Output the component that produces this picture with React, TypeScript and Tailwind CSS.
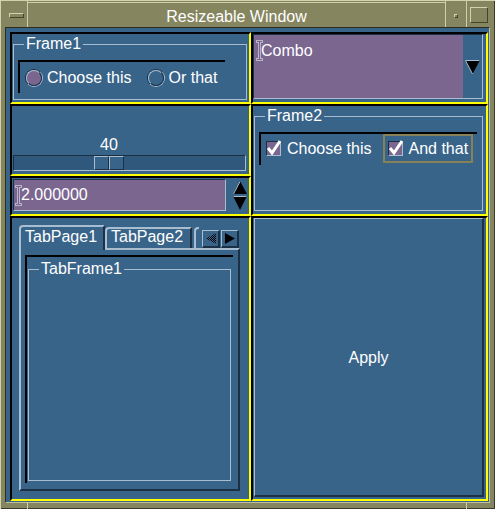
import React from "react";

// Motif-ish "Resizeable Window" with the layout debug grid (yellow) turned on

const cell = "border-2 border-black border-r-[#ffff00] border-b-[#ffff00]";
const sunkenBlack = "border-t-2 border-l-2 border-black";

function IBeam() {
  return (
    <svg width="7" height="21" viewBox="0 0 7 21" className="shrink-0">
      <path
        d="M0.5 0.5H6.5V2.5H4.5V18.5H6.5V20.5H0.5V18.5H2.5V2.5H0.5Z"
        fill="none"
        stroke="#fff"
        strokeWidth="1"
        strokeDasharray="1 1"
      />
    </svg>
  );
}

function GroupBox({ title, className, children }: { title: string; className?: string; children?: React.ReactNode }) {
  return (
    <fieldset className={"border border-[#a9bdd0] min-w-0 " + (className ?? "")}>
      <legend className="ml-[10px] px-[2px] leading-[16px]">{title}</legend>
      {children}
    </fieldset>
  );
}

function Radio({ checked }: { checked?: boolean }) {
  return (
    <span className="flex h-[18px] w-[18px] shrink-0 items-center justify-center rounded-full border border-[#1b2f45] border-r-[#a9bdd0] border-b-[#a9bdd0]">
      <span
        className={
          "h-[16px] w-[16px] rounded-full border border-[#a9bdd0] border-r-[#1b2f45] border-b-[#1b2f45] " +
          (checked ? "bg-[#7b6690]" : "")
        }
      />
    </span>
  );
}

function CheckBox() {
  return (
    <span className="flex h-[15px] w-[15px] shrink-0 bg-[#7b6690] border border-[#1b2f45] border-r-[#a9bdd0] border-b-[#a9bdd0]">
      <svg width="13" height="13" viewBox="0 0 13 13" className="overflow-visible">
        <polyline points="1,6 5,11 13,-1" fill="none" stroke="#fff" strokeWidth="3" />
      </svg>
    </span>
  );
}

function Stipple({ id }: { id: string }) {
  return (
    <defs>
      <pattern id={id} width="2" height="2" patternUnits="userSpaceOnUse">
        <rect width="1" height="1" fill="#000" />
        <rect x="1" y="1" width="1" height="1" fill="#000" />
      </pattern>
    </defs>
  );
}

export default function App() {
  return (
    <div className="flex h-[509px] w-[495px] flex-col bg-[#858560] pl-[5px] pr-[5px] text-[16px] text-white font-['Liberation_Sans',Arial,sans-serif] shadow-[inset_1px_1px_0_#d2d2ae,inset_-1px_-1px_0_#3b3b27]">
      {/* title bar */}
      <div className="flex h-[27px] shrink-0">
        <div className="flex w-[23px] items-center justify-center border-r border-[#cfcfa8] pt-[4px]">
          <div className="h-[5px] w-[15px] border border-[#d2d2ae] border-r-[#45452e] border-b-[#45452e]" />
        </div>
        <div className="flex flex-1 items-center justify-center pt-[3px] border-t border-[#cfcfa8] mt-[2px]">
          Resizeable Window
        </div>
        <div className="flex w-[21px] items-center justify-center border-l border-[#cfcfa8] pt-[4px]">
          <div className="h-[4px] w-[4px] border border-[#d2d2ae] border-r-[#45452e] border-b-[#45452e]" />
        </div>
        <div className="flex w-[24px] items-center justify-center border-l border-[#cfcfa8] pt-[2px]">
          <div className="h-[16px] w-[18px] border border-[#d2d2ae] border-r-[#45452e] border-b-[#45452e]" />
        </div>
      </div>

      {/* client area */}
      <div className="h-[476px] shrink-0 border border-[#2e2e1e] border-r-[#c0c0a0] border-b-[#c0c0a0] bg-[#39648a] pl-[4px] pt-[4px]">
        <div className="grid grid-cols-[241px_237px] grid-rows-[72px_112px_285px]">
          {/* Frame1 */}
          <div className={cell + " flex"}>
            <GroupBox title="Frame1" className="ml-[1px] mr-[2px] mt-[2px] mb-[2px] flex-1">
              <div className={sunkenBlack + " ml-[4px] mt-[8px] w-[207px] h-[33px]"}>
                <div className="flex h-[31px] items-center pl-[5px]">
                  <Radio checked />
                  <span className="ml-[4px]">Choose this</span>
                  <span className="ml-[15px]">
                    <Radio />
                  </span>
                  <span className="ml-[4px]">Or that</span>
                </div>
              </div>
            </GroupBox>
          </div>

          {/* Combo */}
          <div className={cell + " flex"}>
            <div className="mr-[3px] mb-[3px] flex flex-1 border border-[#1b2f45] border-r-[#a9bdd0] border-b-[#a9bdd0]">
              <div className="flex flex-1 items-start bg-[#7b6690] pl-[2px] pt-[5px]">
                <div className="flex h-[21px] items-center">
                  <IBeam />
                  <span className="-ml-[2px]">Combo</span>
                </div>
              </div>
              <div className="flex w-[19px] items-center justify-center">
                <svg width="15" height="14" viewBox="0 0 15 14">
                  <polygon points="0,0 15,0 7.5,14" fill="#000" />
                  <polyline points="7.5,14 0.5,0.5 14.5,0.5" fill="none" stroke="#a9bdd0" strokeWidth="1" />
                </svg>
              </div>
            </div>
          </div>

          {/* slider + spin box */}
          <div className="flex flex-col">
            <div className={cell + " flex h-[72px] flex-col justify-end pb-[3px]"}>
              <div className="mb-[2px] ml-[82px] w-[30px] text-center leading-[16px]">40</div>
              <div className="ml-[1px] mr-[3px] flex h-[16px] border border-[#1b2f45] border-r-[#a9bdd0] border-b-[#a9bdd0] bg-[#30587c]">
                <div className="ml-[80px] flex h-full">
                  <div className="w-[15px] border border-[#a9bdd0] border-r-[#1b2f45] border-b-[#1b2f45] bg-[#39648a]" />
                  <div className="w-[15px] border border-[#a9bdd0] border-r-[#1b2f45] border-b-[#1b2f45] bg-[#39648a]" />
                </div>
              </div>
            </div>
            <div className={cell + " flex h-[40px] items-start"}>
              <div className="ml-[1px] mt-[1px] flex h-[32px] w-[213px] items-center border border-[#1b2f45] border-r-[#a9bdd0] border-b-[#a9bdd0] bg-[#7b6690] pl-[1px]">
                <IBeam />
                <span className="-ml-[1px]">2.000000</span>
              </div>
              <div className="ml-[7px] mt-[3px]">
                <svg width="14" height="29" viewBox="0 0 14 29">
                  <polygon points="7,0 14,13 0,13" fill="#000" />
                  <polyline points="0.5,13 7,0.5" fill="none" stroke="#a9bdd0" />
                  <polygon points="0,15 14,15 7,29" fill="#000" />
                  <polyline points="0.5,15.5 13.5,15.5" fill="none" stroke="#a9bdd0" />
                </svg>
              </div>
            </div>
          </div>

          {/* Frame2 */}
          <div className={cell + " flex"}>
            <GroupBox title="Frame2" className="ml-[1px] mr-[3px] mt-[2px] mb-[3px] flex-1">
              <div className={sunkenBlack + " ml-[4px] mr-[5px] mt-[8px] h-[33px]"}>
                <div className="flex h-[29px] items-center pl-[5px]">
                  <CheckBox />
                  <span className="ml-[6px]">Choose this</span>
                  <div className="ml-[11px] flex h-[29px] items-center border-2 border-[#878157] pl-[3px] pr-[3px]">
                    <CheckBox />
                    <span className="ml-[6px]">And that</span>
                  </div>
                </div>
              </div>
            </GroupBox>
          </div>

          {/* tab widget */}
          <div className={cell + " flex flex-col pl-[7px] pr-[9px] pt-[7px] pb-[8px]"}>
            <div className="flex h-[23px] items-end">
              <div className="relative z-10 -mb-[2px] h-[25px] w-[86px] rounded-tl-[4px] border-2 border-b-0 border-[#a9bdd0] border-r-[#1b2f45] bg-[#39648a] pl-[4px] leading-[20px]">
                TabPage1
              </div>
              <div className="h-[21px] w-[87px] rounded-tl-[4px] border-2 border-b-0 border-[#a9bdd0] border-r-[#1b2f45] pl-[4px] leading-[16px]">
                TabPage2
              </div>
              <div className="ml-[2px] h-[21px] w-[5px] rounded-tl-[4px] border-l-2 border-t-2 border-[#a9bdd0]" />
              <div className="ml-[3px] flex h-[18px]">
                <div className="flex w-[18px] items-center justify-center border border-[#a9bdd0] border-r-2 border-b-2 border-r-[#1b2f45] border-b-[#1b2f45]">
                  <svg width="10" height="11" viewBox="0 0 10 11">
                    <Stipple id="st" />
                    <polygon points="10,0 10,11 0,5.5" fill="url(#st)" />
                  </svg>
                </div>
                <div className="ml-[1px] flex w-[18px] items-center justify-center border border-[#a9bdd0] border-r-2 border-b-2 border-r-[#1b2f45] border-b-[#1b2f45]">
                  <svg width="10" height="11" viewBox="0 0 10 11">
                    <polygon points="0,0 0,11 10,5.5" fill="#000" />
                  </svg>
                </div>
              </div>
            </div>
            <div className="flex flex-1 flex-col border-2 border-[#a9bdd0] border-r-[#1b2f45] border-b-[#1b2f45] pl-[4px] pr-[5px] pt-[5px] pb-[6px]">
              <div className={sunkenBlack + " flex flex-1 flex-col pl-[1px] pr-[2px] pt-[4px] pb-[2px]"}>
                <GroupBox title="TabFrame1" className="flex-1" />
              </div>
            </div>
          </div>

          {/* Apply */}
          <div className={cell + " flex pl-[1px] pr-[2px] pb-[2px]"}>
            <button className="flex flex-1 items-center justify-center border border-[#a9bdd0] border-r-2 border-b-2 border-r-[#1b2f45] border-b-[#1b2f45] pt-[1px]">
              Apply
            </button>
          </div>
        </div>
      </div>

      {/* bottom frame with corner marks */}
      <div className="flex h-[6px] shrink-0">
        <div className="w-[23px] border-r border-[#cfcfa8]" />
        <div className="flex-1" />
        <div className="w-[24px] border-l border-[#cfcfa8]" />
      </div>
    </div>
  );
}
